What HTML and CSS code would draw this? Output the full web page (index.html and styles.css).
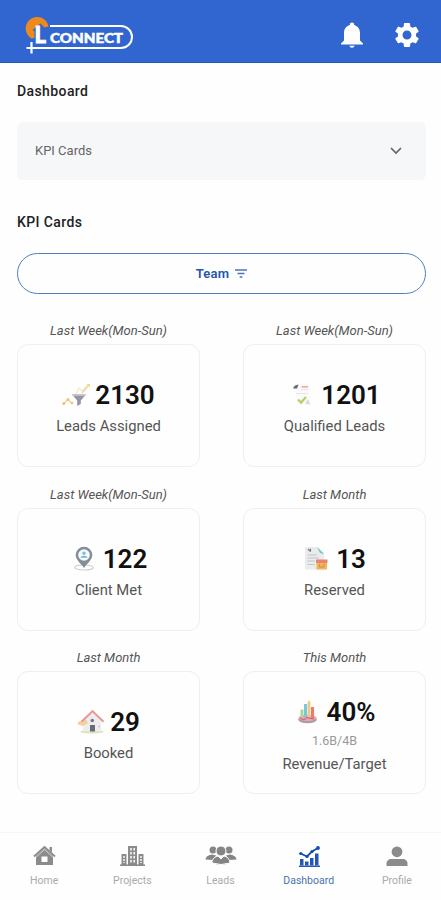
FILE: index.html
```
<!DOCTYPE html>
<html lang="en">
  <head>
    <meta charset="UTF-8" />
    <meta name="viewport" content="width=device-width, initial-scale=1.0" />
    <title>L Connect - Dashboard</title>
    <link rel="stylesheet" href="styles.css">
  </head>
  <body>
    <header class="header">
      <svg class="logo" width="110" height="38" viewBox="0 0 110 38">
        <path d="M7.5 22.5 A11.5 11.5 0 1 1 24.5 10.5 L20.5 11.5 L16.5 7.5 L8.5 14 L10.5 15.500 V22 Z" fill="#ee8a1c" />
        <path d="M26 10 H97 A11 11 0 0 1 97 32 H2.5" fill="none" stroke="#fff" stroke-width="2" />
        <path d="M7.500 26 V37.500" stroke="#fff" stroke-width="2.200" />
        <text class="logo-l" x="10.500" y="26.500">L</text>
        <text class="logo-text" x="26" y="26.500" textLength="73" lengthAdjust="spacingAndGlyphs">CONNECT</text>
      </svg>
      <div class="header-icons">
        <svg width="24" height="26" viewBox="0 0 24 26" fill="#fff">
          <path d="M12 .5c-1.300 0-2.100.8-2.100 1.800v.6C6 3.900 4 7 4 11v7.500L1 21.500v1h22v-1l-3-3V11c0-4-2-7.100-5.900-8.100v-.6c0-1-.8-1.800-2.100-1.800zM9.500 23.800c.2 1.200 1.200 1.900 2.500 1.900s2.300-.7 2.500-1.900z" />
        </svg>
        <svg width="30" height="30" viewBox="0 0 24 24" fill="#fff">
          <path d="M19.140 12.940c.04-.3.060-.61.060-.94 0-.32-.02-.64-.07-.94l2.030-1.580c.18-.14.230-.41.120-.61l-1.920-3.320c-.12-.22-.37-.29-.59-.22l-2.390.96c-.5-.38-1.030-.7-1.620-.94l-.36-2.540c-.04-.24-.24-.41-.48-.41h-3.840c-.24 0-.43.170-.47.410l-.36 2.540c-.59.240-1.130.570-1.620.940l-2.390-.96c-.22-.08-.47 0-.59.220L2.740 8.870c-.12.210-.08.470.120.610l2.030 1.580c-.05.3-.09.630-.09.940s.02.640.070.940l-2.030 1.580c-.18.140-.23.410-.12.610l1.920 3.320c.12.220.370.290.590.220l2.390-.96c.5.380 1.030.7 1.620.940l.36 2.540c.05.240.240.410.480.410h3.840c.24 0 .440-.17.470-.41l.36-2.540c.59-.24 1.130-.56 1.620-.94l2.390.96c.22.080.470 0 .590-.22l1.920-3.320c.12-.22.070-.47-.12-.61zM12 15.600c-1.980 0-3.600-1.620-3.600-3.600s1.620-3.600 3.600-3.600 3.600 1.620 3.600 3.600-1.620 3.600-3.600 3.600z" />
        </svg>
      </div>
    </header>

    <main class="content">
      <h1 class="title">Dashboard</h1>
      <div class="select">
        <span>KPI Cards</span>
        <svg width="12" height="8" viewBox="0 0 12 8">
          <path d="M1 1 L6 6 L11 1" fill="none" stroke="#666" stroke-width="1.700" />
        </svg>
      </div>

      <h2 class="title cards-title">KPI Cards</h2>
      <button class="team-btn">
        Team
        <svg width="12" height="9" viewBox="0 0 12 9">
          <path d="M0 1 H12 M2.500 4.500 H9.500 M4.700 8 H7.300" stroke="#4a76b8" stroke-width="1.300" />
        </svg>
      </button>

      <div class="cards">
        <div class="card-box">
          <p class="period">Last Week(Mon-Sun)</p>
          <div class="card">
            <div class="value-row">
              <svg width="28" height="26" viewBox="0 0 28 26">
                <path d="M1 22 L6 17.500 L10 21.500" fill="none" stroke="#f3cf94" stroke-width="1.200" />
                <circle cx="1.800" cy="21.500" r="1.500" fill="#f1c078" />
                <circle cx="6" cy="17.500" r="1.500" fill="#f1c078" />
                <circle cx="10" cy="21" r="1.300" fill="#f1c078" />
                <path d="M14 12 L17 6 L20 9 L27 2" fill="none" stroke="#f3ecd0" stroke-width="1.500" />
                <path d="M20 11 L26 4" stroke="#ecd595" stroke-width="1.300" />
                <path d="M24.500 2 H28 V5.500 Z" fill="#ecd78c" />
                <path d="M10 12.500 H24 L18.800 18.500 V22 L15.200 24 V18.500 Z" fill="#9694a5" />
                <path d="M10 12.500 H24 L23 14 H11 Z" fill="#c0bfcc" />
              </svg>
              <span class="value">2130</span>
            </div>
            <p class="card-name">Leads Assigned</p>
          </div>
        </div>

        <div class="card-box">
          <p class="period">Last Week(Mon-Sun)</p>
          <div class="card">
            <div class="value-row">
              <svg width="28" height="26" viewBox="0 0 28 26">
                <path d="M6 2 H22 V23 H10 Z" fill="#fafafa" />
                <path d="M5 6.500 C6 3.500 8 3 10.500 2.500 L9 6.500 Z" fill="#666" />
                <path d="M13.500 4.800 H20" stroke="#edaaa9" stroke-width="1.600" />
                <path d="M13 7.500 H20 M8 11.500 H20" stroke="#e5e5e8" stroke-width="1" />
                <path d="M17 21.500 L20 17 L22.500 22.500 Z" fill="#d8d9e2" />
                <path d="M10 17.500 L13 20.500 L18 15" fill="none" stroke="#b8cf62" stroke-width="2.300" />
              </svg>
              <span class="value">1201</span>
            </div>
            <p class="card-name">Qualified Leads</p>
          </div>
        </div>

        <div class="card-box">
          <p class="period">Last Week(Mon-Sun)</p>
          <div class="card">
            <div class="value-row">
              <svg width="28" height="26" viewBox="0 0 28 26">
                <ellipse cx="14" cy="21.500" rx="9.300" ry="2.500" fill="none" stroke="#c9d1d5" stroke-width="1.200" />
                <path d="M14 22 C11 17.500 5.700 14 5.700 9 A8.300 8.300 0 0 1 22.300 9 C22.300 14 17 17.500 14 22 Z" fill="#878d96" />
                <circle cx="14" cy="9" r="5.800" fill="#f2fbff" />
                <circle cx="14" cy="7.200" r="1.700" fill="#86bcd4" />
                <path d="M10.500 11.800 C10.500 9 17.500 9 17.500 11.800 Z" fill="#78b4d0" />
              </svg>
              <span class="value">122</span>
            </div>
            <p class="card-name">Client Met</p>
          </div>
        </div>

        <div class="card-box">
          <p class="period">Last Month</p>
          <div class="card">
            <div class="value-row">
              <svg width="28" height="26" viewBox="0 0 28 26">
                <path d="M2 1 H15 L21 7 V23.500 H2 Z" fill="#e9ebec" />
                <path d="M14 1 L21 8 L17 7 Z" fill="#62cdb9" />
                <path d="M5 3 L7.500 5.500 M7.500 2.800 V5.500" stroke="#777" stroke-width="1.200" />
                <path d="M4.500 9 H14 M4.500 12 H16 M4.500 15 H12 M4.500 18.500 H11.500" stroke="#c3c7c8" stroke-width="1" />
                <path d="M13.500 15 H24 V23.500 H13.500 Z" fill="#f0b45c" />
                <path d="M13 13.500 H24.500 V17 H13 Z" fill="#e98471" />
                <path d="M16.500 18 V21 H21 V18" fill="none" stroke="#dd8a50" stroke-width="1" />
              </svg>
              <span class="value">13</span>
            </div>
            <p class="card-name">Reserved</p>
          </div>
        </div>

        <div class="card-box">
          <p class="period">Last Month</p>
          <div class="card">
            <div class="value-row">
              <svg width="28" height="26" viewBox="0 0 28 26">
                <ellipse cx="15" cy="22.800" rx="11.500" ry="1.700" fill="#d9e2bb" />
                <path d="M6 12 L15 4 L24 12 V22.500 H6 Z" fill="#edecee" />
                <path d="M1 13 L9 10.500 L11 14 L6 17 L1 15.500 Z" fill="#f7cf9c" />
                <path d="M4.500 12.800 L15.500 2.200 L26.500 12.800" fill="none" stroke="#e79a93" stroke-width="2" />
                <circle cx="15.300" cy="11.500" r="1.800" fill="#777b86" />
                <path d="M13 16 H18 V22.500 H13 Z" fill="#696b73" />
                <path d="M21 16 H23 V19 H21 Z" fill="#d8dce1" />
              </svg>
              <span class="value">29</span>
            </div>
            <p class="card-name">Booked</p>
          </div>
        </div>

        <div class="card-box">
          <p class="period">This Month</p>
          <div class="card">
            <div class="value-row">
              <svg width="28" height="26" viewBox="0 0 28 26">
                <ellipse cx="13.500" cy="20.500" rx="9.300" ry="3.800" fill="#a89da5" />
                <ellipse cx="13.500" cy="19" rx="9" ry="3.200" fill="#e5a5aa" />
                <path d="M6.500 10.500 H9.500 V18.500 H6.500 Z" fill="#a8d5a0" />
                <path d="M10 5 H13 V18.500 H10 Z" fill="#78c7dc" />
                <path d="M13.500 3.500 L15 1 L16.500 3.500 V18.500 H13.500 Z" fill="#f2ca84" />
                <path d="M17 8 H20 V19 H17 Z" fill="#e87d71" />
                <path d="M6 19 L10 21 L13 18.500 L20 20" fill="none" stroke="#d2596c" stroke-width="1" />
              </svg>
              <span class="value">40%</span>
            </div>
            <p class="ratio">1.6B/4B</p>
            <p class="card-name">Revenue/Target</p>
          </div>
        </div>
      </div>
    </main>

    <nav class="nav">
      <a class="nav-item">
        <svg width="32" height="22" viewBox="0 0 32 22">
          <path d="M8 11 V20 H25 V11 L16.500 3.500 Z" fill="#8b8b8b" />
          <path d="M6 11.500 L16.500 2 L27 11.500" fill="none" stroke="#8b8b8b" stroke-width="1.800" />
          <path d="M21.500 2 H24 V7.500 L21.500 5 Z" fill="#8b8b8b" />
          <path d="M8 12.300 L16.500 4.700 L25 12.300" fill="none" stroke="#ddd" stroke-width=".8" />
          <path d="M13.500 11.500 H19.500 V17 H13.500 Z" fill="#fff" />
        </svg>
        <span>Home</span>
      </a>
      <a class="nav-item">
        <svg width="32" height="22" viewBox="0 0 32 22">
          <path d="M12 1 H21 V20 H12 Z M5.500 9 H10.500 V20 H5.500 Z M22.500 9 H27.500 V20 H22.500 Z" fill="#8b8b8b" />
          <path d="M4 20.200 H29" stroke="#858585" stroke-width="1.500" />
          <path d="M15 3 V18 M18.200 3 V18" stroke="#fff" stroke-width="1.500" stroke-dasharray="2.500 1.500" />
          <path d="M8 11 V18 M25 11 V18" stroke="#e4e4e4" stroke-width="1.800" stroke-dasharray="2 1" />
        </svg>
        <span>Projects</span>
      </a>
      <a class="nav-item">
        <svg width="32" height="22" viewBox="0 0 32 22" fill="#858585">
          <circle cx="8" cy="5" r="3.500" />
          <circle cx="24" cy="5" r="3.500" />
          <path d="M.5 14.500 C1 11 4 10 7 9.500 L11 10.500 L8 15 Z M31.500 14.500 C31 11 28 10 25 9.500 L21 10.500 L24 15 Z" />
          <circle cx="16" cy="6" r="5" stroke="#fff" />
          <path d="M7 18 C7 14 10 11.500 13 11 L16 14 L19 11 C22 11.500 25 14 25 18 Q16 21 7 18 Z" stroke="#fff" />
        </svg>
        <span>Leads</span>
      </a>
      <a class="nav-item active">
        <svg width="32" height="22" viewBox="0 0 32 22">
          <path d="M7 14 H10.500 V20.500 H7 Z M12 16.500 H15.500 V20.500 H12 Z M17 13 H20.500 V20.500 H17 Z M22 8.500 H25.500 V20.500 H22 Z" fill="#2455b8" />
          <path d="M6 21.300 H27" stroke="#2455b8" stroke-width="1.500" />
          <path d="M7.500 8.500 L14 11.500 L19 6.500 L25 3" fill="none" stroke="#164ab4" stroke-width="1.800" />
          <circle cx="7.800" cy="8.500" r="1.600" fill="#164ab4" />
          <circle cx="14" cy="11.500" r="1.600" fill="#164ab4" />
          <circle cx="19" cy="6.500" r="1.600" fill="#164ab4" />
          <circle cx="25" cy="3" r="1.900" fill="#164ab4" />
        </svg>
        <span>Dashboard</span>
      </a>
      <a class="nav-item">
        <svg width="32" height="22" viewBox="0 0 32 22" fill="#8b8b8b">
          <circle cx="16" cy="6.800" r="5.400" />
          <path d="M5.500 21 V18.500 C5.500 15.500 8 14 10 14 H22 C24 14 26.500 15.500 26.500 18.500 V21 Z" />
        </svg>
        <span>Profile</span>
      </a>
    </nav>
  </body>
</html>
```
FILE: styles.css
```
* {
  box-sizing: border-box;
}
body {
  margin: 0;
  height: 900px;
  display: flex;
  flex-direction: column;
  background-color: #fefefe;
  color: #222;
  font-family: Roboto, "Liberation Sans", sans-serif;
}
p,
h1,
h2 {
  margin: 0;
}
.header {
  height: 63px;
  padding: 8px 19px 0 24px;
  display: flex;
  justify-content: space-between;
  align-items: center;
  background-color: #3166d0;
  border-bottom: 1px solid #2259b8;
}
.logo {
  margin-top: -1px;
}
.logo-l {
  font: 900 22px Lato, sans-serif;
  fill: #fff;
  stroke: #fff;
  stroke-width: 0.8px;
}
.logo-text {
  font: 900 14px Lato, sans-serif;
  fill: #fff;
  stroke: #fff;
  stroke-width: 0.5px;
}
.header-icons {
  display: flex;
  align-items: center;
  gap: 28px;
}
.content {
  flex: 1;
  padding: 18px 15px 0 17px;
}
.title {
  font-size: 14px;
  line-height: 20px;
  font-weight: 500;
  letter-spacing: 0.4px;
}
.select {
  height: 58px;
  margin-top: 21px;
  padding: 0 24px 0 18px;
  display: flex;
  align-items: center;
  justify-content: space-between;
  border-radius: 6px;
  background-color: #f6f7f9;
  color: #666;
  font-size: 13px;
  line-height: 20px;
}
.cards-title {
  margin-top: 32px;
}
.team-btn {
  width: 100%;
  height: 41px;
  margin-top: 21px;
  display: flex;
  align-items: center;
  justify-content: center;
  gap: 6px;
  border: 1px solid #4f7fbd;
  border-radius: 21px;
  background-color: #fefefe;
  color: #2355a8;
  font-family: inherit;
  font-size: 13px;
  font-weight: 600;
  letter-spacing: 0.2px;
}
.cards {
  margin-top: 27px;
  display: grid;
  grid-template-columns: 183px 183px;
  justify-content: space-between;
  row-gap: 17.5px;
}
.period {
  text-align: center;
  font-size: 13px;
  line-height: 20px;
  font-style: italic;
  color: #555;
}
.card {
  height: 123px;
  margin-top: 3px;
  padding-top: 5px;
  display: flex;
  flex-direction: column;
  align-items: center;
  justify-content: center;
  border: 1px solid #efefef;
  border-radius: 11px;
}
.value-row {
  display: flex;
  align-items: center;
  gap: 5px;
}
.value {
  font-size: 26px;
  line-height: 36px;
  font-weight: 600;
  color: #111;
}
.ratio {
  font-size: 12.5px;
  line-height: 21px;
  color: #999;
}
.card-name {
  font-size: 14.8px;
  line-height: 26px;
  color: #555;
}
.nav {
  height: 68px;
  padding-top: 12px;
  display: flex;
  border-top: 1px solid #f7f7f7;
}
.nav-item {
  flex: 1;
  display: flex;
  flex-direction: column;
  align-items: center;
  gap: 7px;
  color: #aaa;
  font-size: 10.5px;
  line-height: 14px;
}
.active {
  color: #4873b4;
}
```
